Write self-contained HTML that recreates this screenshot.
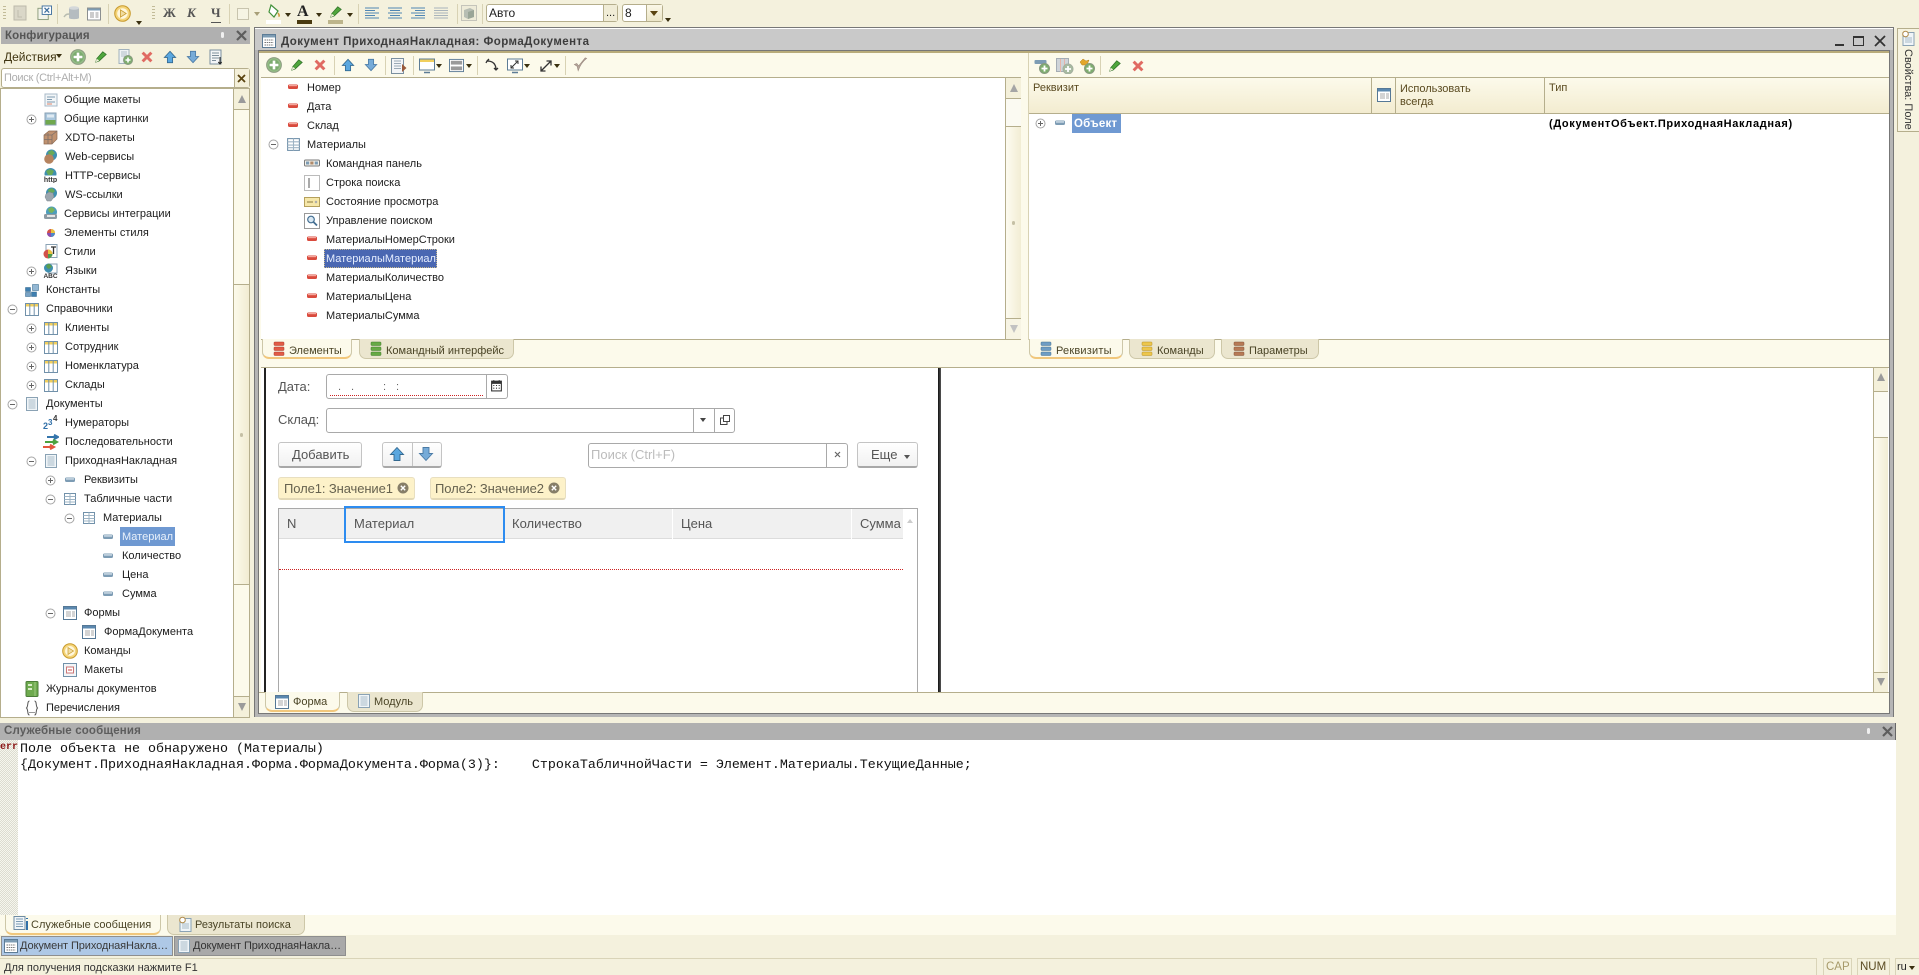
<!DOCTYPE html>
<html lang="ru"><head><meta charset="utf-8"><title>Конфигуратор</title>
<style>
html,body{margin:0;padding:0;width:1919px;height:975px;overflow:hidden;background:#f4f1dd}
body{position:relative;font:11px "Liberation Sans","Noto Sans CJK SC",sans-serif;color:#1c1c1c}
div,span,svg{position:absolute;box-sizing:border-box}
.t{white-space:nowrap;height:19px;line-height:21px}
.i{overflow:visible}
.s{width:1px;background:#d8d2b4}
.h{color:#5a4a20}
.f{font-size:13px;color:#555;white-space:nowrap;line-height:16px}
.tab{height:20px;background:#ebe6cf;border:1px solid #cdc7a8;border-top:0;border-radius:0 0 7px 7px}
.tab.a{background:#fcfaeb;border-bottom:2px solid #f1c77c}
.tt{white-space:nowrap;line-height:16px;color:#4a4426}
.btn{background:linear-gradient(#fff,#f1f1f1);border:1px solid #c4c4c4;border-bottom:2px solid #a8a8a8;border-radius:3px}
.inp{background:#fff;border:1px solid #a9a9a9;border-radius:3px}
.chip{background:#fdf2c9;border:1px solid #e8dfc0;border-bottom:2px solid #e3d9b6;border-radius:3px;height:23px}
.sb{background:linear-gradient(90deg,#fdfbf0,#f2edd4);border-left:1px solid #b5ae8c}
.ar{width:0;height:0;border-left:3px solid transparent;border-right:3px solid transparent;border-top:4px solid #3a3010}
.mn{font:13.33px "Liberation Mono","Noto Sans CJK SC",monospace;color:#111;white-space:pre;line-height:16px}
</style></head><body>
<svg width="0" height="0" style="left:0;top:0">
<symbol id="plus" viewBox="0 0 16 16"><circle cx="8" cy="8" r="7.4" fill="#94bd86" stroke="#8d9c82"/><circle cx="8" cy="8" r="5.5" fill="#7cab70"/><path d="M8 3.6v8.8M3.6 8h8.8" stroke="#fff" stroke-width="2.6"/></symbol>
<symbol id="pen" viewBox="0 0 16 16"><path d="M2 14l1-4 7-8 4 3-8 7.5z" fill="#4fa53c" stroke="#2e6e28" stroke-width=".8"/><path d="M2 14l1-4 3 2z" fill="#f4f1dd"/></symbol>
<symbol id="x" viewBox="0 0 16 16"><path d="M3 3l10 10M13 3L3 13" stroke="#e06a62" stroke-width="3.4"/></symbol>
<symbol id="up" viewBox="0 0 16 16"><path d="M8 1.5L14.5 8.5H11V14.5H5V8.5H1.500z" fill="#5aa7df" stroke="#33688f" stroke-width=".9"/></symbol>
<symbol id="dn" viewBox="0 0 16 16"><path d="M8 14.500L14.500 7.500H11V1.500H5V7.500H1.500z" fill="#76abd8" stroke="#4a7aa5" stroke-width=".9"/></symbol>
<symbol id="ep" viewBox="0 0 11 11"><circle cx="5.500" cy="5.500" r="4.500" fill="#fff" stroke="#a5a5a5"/><path d="M3 5.500h5M5.500 3v5" stroke="#666"/></symbol>
<symbol id="em" viewBox="0 0 11 11"><circle cx="5.500" cy="5.500" r="4.500" fill="#fff" stroke="#a5a5a5"/><path d="M3 5.500h5" stroke="#666"/></symbol>
<symbol id="fr" viewBox="0 0 12 12"><rect x="1" y="3.500" width="10" height="4.500" rx="1.500" fill="#d94a3d"/><rect x="2" y="4" width="8" height="1.200" fill="#f5a79c"/></symbol>
<symbol id="fb" viewBox="0 0 12 12"><rect x="1" y="3.500" width="10" height="4.500" rx="1.500" fill="#7d9cb4"/><rect x="2" y="4.300" width="8" height="1.300" fill="#d7e3ec"/></symbol>
<symbol id="cat" viewBox="0 0 14 14"><rect x=".5" y="1.500" width="13" height="12" fill="#fff" stroke="#7191aa"/><rect x="1" y="2" width="12" height="2.500" fill="#f1cf5d"/><path d="M4.800 2v11M9.200 2v11" stroke="#7191aa"/></symbol>
<symbol id="tp" viewBox="0 0 14 14"><rect x="1.500" y="1.500" width="11" height="11" fill="#fff" stroke="#7191aa"/><path d="M1.500 4.500h11M7 1.500v11M1.500 7.500h11M1.500 10h11" stroke="#9eb4c5"/></symbol>
<symbol id="doc" viewBox="0 0 14 14"><rect x="1.500" y=".5" width="11" height="13" fill="#f0f5f8" stroke="#8aa2b4"/><path d="M3.500 3h7M3.500 5h7M3.500 7h7M3.500 9h7M3.500 11h7" stroke="#a7bbc9"/></symbol>
<symbol id="frm" viewBox="0 0 14 14"><rect x=".5" y=".5" width="13" height="13" fill="#fff" stroke="#557896"/><rect x="1" y="1" width="12" height="2.500" fill="#5b88af"/><path d="M3 6h5M3 8h5M3 10h5M9 6h3M9 8h3M9 10h3" stroke="#aaa"/></symbol>
<symbol id="mak" viewBox="0 0 14 14"><rect x=".5" y=".5" width="13" height="13" fill="#f3f6f8" stroke="#7191aa"/><rect x="3.500" y="4" width="7" height="6" fill="#fff" stroke="#c77"/><path d="M5 7h4" stroke="#c44"/></symbol>
<symbol id="play" viewBox="0 0 16 16"><circle cx="8" cy="8" r="7.300" fill="#f4d479" stroke="#c89a2c"/><circle cx="8" cy="8" r="5" fill="#fff7dc"/><path d="M6 4.500L11.500 8 6 11.500z" fill="#f1dca0" stroke="#c89a2c" stroke-width=".7"/></symbol>
<symbol id="mk" viewBox="0 0 14 14"><rect x="1" y="1" width="12" height="12" fill="#f2f5f7" stroke="#a8bac8"/><path d="M3 4h8M3 6.500h5M3 9h8" stroke="#7e9ab0"/><path d="M3 11h5" stroke="#e0856b"/></symbol>
<symbol id="pic" viewBox="0 0 14 14"><rect x="1" y="1" width="11" height="12" fill="#a9c6dc" stroke="#8aa2b4"/><rect x="1.500" y="8" width="10" height="4.500" fill="#6fa84e"/><rect x="3" y="2.500" width="7" height="3" fill="#dfeaf2"/></symbol>
<symbol id="xd" viewBox="0 0 15 15"><path d="M1 5l5-4h8v8l-5 5H1z" fill="#c09270" stroke="#8f6a4f" stroke-width=".7"/><path d="M1 5h8v9M9 5l5-4M5 3v11M1 9.500h8" stroke="#7d6f68" stroke-width=".8" fill="none"/></symbol>
<symbol id="web" viewBox="0 0 15 15"><circle cx="8.500" cy="6" r="5.500" fill="#3f8fb0"/><path d="M5 3l4-2 3 3-3 3-3-1z" fill="#67a958"/><circle cx="6" cy="10" r="4.800" fill="#b5835f"/></symbol>
<symbol id="http" viewBox="0 0 15 15"><circle cx="7.500" cy="6" r="6" fill="#3f8fb0"/><path d="M3 3l4-2 4 2-2 4-4 0z" fill="#67a958"/><rect x="0" y="7.500" width="15" height="7.500" fill="#fff"/><text x="7.500" y="14" font-family="Liberation Sans" font-size="7" font-weight="700" text-anchor="middle" fill="#333">http</text></symbol>
<symbol id="ws" viewBox="0 0 15 15"><circle cx="8.500" cy="6" r="5.500" fill="#3f8fb0"/><path d="M5 3l4-2 3 3-3 3-3-1z" fill="#67a958"/><path d="M3 7l3-2 4 1 1 4-3 4-4 0-2-4z" fill="#9ca6ae" stroke="#7b858d" stroke-width=".5"/></symbol>
<symbol id="int" viewBox="0 0 15 15"><circle cx="8.500" cy="6" r="5.500" fill="#4e9dbb"/><path d="M5 3l4-2 3 3-3 3-3-1z" fill="#7ab45a"/><rect x="1" y="8" width="13" height="5" rx="1.500" fill="#8d9aa3"/><rect x="4" y="9" width="8" height="2" fill="#e6e6e6"/></symbol>
<symbol id="sel" viewBox="0 0 14 14"><circle cx="7" cy="7" r="4" fill="#d2514a"/><path d="M7 3a4 4 0 0 1 4 4H7z" fill="#e8c23d"/><path d="M11 7a4 4 0 0 1-4 4V7z" fill="#4e89c7"/><path d="M7 11a4 4 0 0 1-4-4h4z" fill="#8a4fb0"/></symbol>
<symbol id="sty" viewBox="0 0 15 15"><rect x="3" y=".5" width="11" height="13" fill="#fff" stroke="#8aa2b4"/><path d="M8 3h5M10.500 3v7" stroke="#333" stroke-width="1.300"/><circle cx="5" cy="10" r="4.500" fill="#d2514a"/><path d="M5 5.500a4.500 4.500 0 0 1 4.500 4.500H5z" fill="#e8c23d"/><path d="M9.500 10A4.500 4.500 0 0 1 5 14.500V10z" fill="#4e9a4f"/></symbol>
<symbol id="lng" viewBox="0 0 15 15"><rect x="5" y="1" width="9" height="9" fill="#fff" stroke="#8aa2b4"/><circle cx="5.500" cy="5" r="4.500" fill="#3f8fb0"/><path d="M3 2.500l3-2 3 3-3 2.500-2-1z" fill="#5a9d4f"/><text x="7.500" y="15" font-family="Liberation Sans" font-size="6.500" font-weight="700" text-anchor="middle" fill="#333">ABC</text></symbol>
<symbol id="con" viewBox="0 0 14 14"><rect x=".5" y="4.500" width="5" height="4" fill="#3f7fb0" stroke="#2d6288" stroke-width=".5"/><rect x=".5" y="9.500" width="5" height="4" fill="#79a3c5" stroke="#2d6288" stroke-width=".5"/><rect x="6.500" y="9" width="5" height="4.500" fill="#3f7fb0" stroke="#2d6288" stroke-width=".5"/><rect x="7.500" y="1.500" width="6" height="6" fill="#94b8d4" stroke="#2d6288" stroke-width=".5"/></symbol>
<symbol id="num" viewBox="0 0 16 16"><text x="0" y="15" font-family="Liberation Sans" font-size="9" font-weight="700" fill="#2f6fa8">2</text><text x="5" y="11" font-family="Liberation Sans" font-size="8" font-weight="700" fill="#2f6fa8">3</text><text x="10" y="7" font-family="Liberation Sans" font-size="8" font-weight="700" fill="#3a3a3a">4</text></symbol>
<symbol id="seq" viewBox="0 0 16 16"><path d="M4 3h9M11 .8L15 3l-4 2.200" stroke="#3475ac" stroke-width="2" fill="none"/><path d="M2 8h10M10 5.800L14 8l-4 2.200" stroke="#4ca23f" stroke-width="2" fill="none"/><path d="M0 13h9M7 10.800l4 2.200-4 2.200" stroke="#e3573e" stroke-width="2" fill="none"/></symbol>
<symbol id="jr" viewBox="0 0 14 16"><rect x="1" y=".5" width="12" height="15" rx="1" fill="#6eaa4e" stroke="#4b7d38"/><rect x="3" y="3" width="4" height="2" fill="#d8ecc8"/><rect x="3" y="7" width="4" height="2" fill="#d8ecc8"/><path d="M10 1v14" stroke="#9dc982"/></symbol>
<symbol id="enu" viewBox="0 0 14 16"><path d="M4.500 1C2 1 3.500 6 1.500 8c2 2 .5 7 3 7M9.500 1c2.500 0 1 5 3 7-2 2-.5 7-3 7" stroke="#555" fill="none"/><path d="M4.500 12.500h1M6.500 12.500h1M8.500 12.500h1" stroke="#333"/></symbol>
<symbol id="cmd" viewBox="0 0 16 14"><rect x=".5" y="4" width="15" height="6" rx="1" fill="#f3f1ea" stroke="#7a7a7a"/><rect x="2" y="5.500" width="3.200" height="3" fill="#7d9cb4"/><rect x="6.300" y="5.500" width="3.200" height="3" fill="#b08a6a"/><rect x="10.700" y="5.500" width="3.200" height="3" fill="#7d9cb4"/></symbol>
<symbol id="str" viewBox="0 0 16 16"><rect x=".5" y=".5" width="15" height="15" fill="#fff" stroke="#bbb"/><path d="M5 3v10" stroke="#555"/></symbol>
<symbol id="st" viewBox="0 0 16 14"><rect x=".5" y="2.500" width="15" height="9" fill="#f6e7a9" stroke="#b5a05c"/><path d="M3 7h6" stroke="#8a7a40"/><path d="M11 6l2 2M13 6l-2 2" stroke="#aaa"/></symbol>
<symbol id="sr" viewBox="0 0 16 16"><rect x=".5" y=".5" width="15" height="15" fill="#fff" stroke="#999"/><circle cx="7" cy="6.500" r="3.300" fill="#d9e8f3" stroke="#446f92" stroke-width="1.200"/><path d="M9.500 9l3.500 3.500" stroke="#446f92" stroke-width="1.800"/></symbol>
<symbol id="l3r" viewBox="0 0 12 16"><rect x="1" y="1" width="10" height="3.500" rx=".7" fill="#e25b46" stroke="#a83a2c" stroke-width=".5"/><rect x="1" y="6" width="10" height="3.500" rx=".7" fill="#e25b46" stroke="#a83a2c" stroke-width=".5"/><rect x="1" y="11" width="10" height="3.500" rx=".7" fill="#e25b46" stroke="#a83a2c" stroke-width=".5"/></symbol>
<symbol id="l3g" viewBox="0 0 12 16"><rect x="1" y="1" width="10" height="3.500" rx=".7" fill="#67aa45" stroke="#3f7a2a" stroke-width=".5"/><rect x="1" y="6" width="10" height="3.500" rx=".7" fill="#67aa45" stroke="#3f7a2a" stroke-width=".5"/><rect x="1" y="11" width="10" height="3.500" rx=".7" fill="#67aa45" stroke="#3f7a2a" stroke-width=".5"/></symbol>
<symbol id="l3b" viewBox="0 0 12 16"><rect x="1" y="1" width="10" height="3.500" rx=".7" fill="#6f9dc4" stroke="#47708f" stroke-width=".5"/><rect x="1" y="6" width="10" height="3.500" rx=".7" fill="#6f9dc4" stroke="#47708f" stroke-width=".5"/><rect x="1" y="11" width="10" height="3.500" rx=".7" fill="#6f9dc4" stroke="#47708f" stroke-width=".5"/></symbol>
<symbol id="l3y" viewBox="0 0 12 16"><rect x="1" y="1" width="10" height="3.500" rx=".7" fill="#edc64c" stroke="#b48f25" stroke-width=".5"/><rect x="1" y="6" width="10" height="3.500" rx=".7" fill="#edc64c" stroke="#b48f25" stroke-width=".5"/><rect x="1" y="11" width="10" height="3.500" rx=".7" fill="#edc64c" stroke="#b48f25" stroke-width=".5"/></symbol>
<symbol id="l3n" viewBox="0 0 12 16"><rect x="1" y="1" width="10" height="3.500" rx=".7" fill="#b77a55" stroke="#815338" stroke-width=".5"/><rect x="1" y="6" width="10" height="3.500" rx=".7" fill="#b77a55" stroke="#815338" stroke-width=".5"/><rect x="1" y="11" width="10" height="3.500" rx=".7" fill="#b77a55" stroke="#815338" stroke-width=".5"/></symbol>
<symbol id="msg" viewBox="0 0 16 16"><rect x="1" y=".5" width="11" height="13" fill="#f0f5f8" stroke="#6f8ca3"/><path d="M3 3h7M3 5.500h7M3 8h7M3 10.500h7" stroke="#7d9cb4"/><path d="M14 2v1M14 5v9" stroke="#2f6fa8" stroke-width="2"/></symbol>
<symbol id="find" viewBox="0 0 16 16"><rect x="3" y="2.500" width="11" height="13" fill="#f0f5f8" stroke="#8aa2b4"/><path d="M5 8h7M5 10h7M5 12h7" stroke="#a7bbc9"/><circle cx="5.500" cy="4" r="2.800" fill="#fff" stroke="#b08a4a"/></symbol>
<symbol id="gray" viewBox="0 0 14 16"><rect x="1" y="1" width="12" height="14" fill="#dad7c8" stroke="#bcb9aa"/><path d="M5 5v7h4" stroke="#c0bdae" fill="none"/></symbol>
<symbol id="dbg" viewBox="0 0 18 16"><path d="M6 3v10c0 1.500 10 1.500 10 0V3z" fill="#b5bcc0"/><ellipse cx="11" cy="3" rx="5" ry="1.800" fill="#d4d8da"/><path d="M1 12c2-3 3-3 6-3" stroke="#b8bcb0" stroke-width="1.500" fill="none"/></symbol>
<symbol id="dx" viewBox="0 0 16 16"><rect x="1" y="3" width="11" height="12" fill="#f3f3ea" stroke="#8b9b7b"/><rect x="5.500" y=".5" width="10" height="9" fill="#fff" stroke="#3f6f9e"/><path d="M8 2.500l5 5M13 2.500l-5 5" stroke="#3f6f9e" stroke-width="1.400"/></symbol>
<symbol id="wn" viewBox="0 0 14 14"><rect x=".5" y="1" width="13" height="12" fill="#fff" stroke="#8b8f90"/><rect x="1" y="1.500" width="12" height="2" fill="#7d9cb4"/><path d="M3 6h4M3 8h4M3 10h4M8.500 6h3M8.500 8h3M8.500 10h3" stroke="#999"/></symbol>
<symbol id="ttl" viewBox="0 0 14 14"><rect x=".5" y=".5" width="13" height="13" fill="#fff" stroke="#5d7c96"/><rect x="1" y="1" width="12" height="2.500" fill="#7d9cb4"/><path d="M2.500 6h9M2.500 8.500h9M2.500 11h9" stroke="#777" stroke-dasharray="1.500 .7"/></symbol>
<symbol id="sw" viewBox="0 0 16 16"><rect x=".5" y="1" width="15" height="11" fill="#fff" stroke="#5d7c96"/><rect x="1" y="1.500" width="14" height="2.500" fill="#f1cf5d"/><path d="M5 14.500h6" stroke="#5d7c96" stroke-width="1.500"/></symbol>
<symbol id="sp" viewBox="0 0 16 16"><rect x=".5" y="1.500" width="15" height="13" fill="#fff" stroke="#5d7c96"/><rect x="2" y="3" width="12" height="4" fill="#9a9a9a"/><rect x="2" y="9" width="12" height="4" fill="#9a9a9a"/></symbol>
<symbol id="rs" viewBox="0 0 16 16"><rect x=".5" y="1" width="15" height="11" fill="#fff" stroke="#5d7c96"/><path d="M4 10l7-7M8 3h3v3M4 7v3h3" stroke="#333" fill="none"/><path d="M5 14.500h6" stroke="#5d7c96" stroke-width="1.500"/></symbol>
<symbol id="di" viewBox="0 0 14 14"><path d="M2 12L12 2M7.500 2H12v4.500M2 7.500V12h4.500" stroke="#333" stroke-width="1.300" fill="none"/></symbol>
<symbol id="flip" viewBox="0 0 14 14"><path d="M2 3c6 0 9 3 9 9M1 5l1-2 2-2M9 10l2 2 2-2" stroke="#333" stroke-width="1.300" fill="none"/></symbol>
<symbol id="ok" viewBox="0 0 16 16"><path d="M1.500 8l3 2 1 4.500C7.500 9 10 5 14.500 1.500L13 1 6 9.500 4 7z" fill="#b7a79d" stroke="#9b8a80" stroke-width=".7"/></symbol>
<symbol id="fw" viewBox="0 0 16 16"><rect x=".5" y=".5" width="12" height="15" fill="#f3f5f7" stroke="#7a8f9f"/><path d="M3 3h7M3 5.500h7M3 8h7M3 10.500h7" stroke="#9aa9b5"/><path d="M11 6l4.500 4-4.500 4z" fill="#9a5a3a"/></symbol>
<symbol id="la" viewBox="0 0 14 16"><rect x="1" y="1" width="11" height="14" fill="#f3f5f7" stroke="#7a8f9f"/><path d="M3 4h7M3 6.500h7M3 9h7M3 11.500h4" stroke="#7d8e9b"/><path d="M11 8v7M9.300 13l1.700 2 1.700-2" stroke="#222" fill="none"/></symbol>
<symbol id="dn1" viewBox="0 0 16 16"><rect x="2" y=".5" width="10" height="14" fill="#eef2f4" stroke="#a2b2bd"/><path d="M4 3h6M4 5h6M4 7h6" stroke="#b0bec8"/><circle cx="11" cy="11" r="4.500" fill="#7dad6e" stroke="#889a80"/><path d="M11 8.500v5M8.500 11h5" stroke="#fff" stroke-width="1.600"/></symbol>
<symbol id="ad1" viewBox="0 0 16 16"><rect x=".5" y="2" width="12" height="4" rx="1" fill="#7d9cb4"/><circle cx="10.500" cy="10.500" r="5" fill="#7dad6e" stroke="#889a80"/><path d="M10.500 7.500v6M7.500 10.500h6" stroke="#fff" stroke-width="1.800"/></symbol>
<symbol id="ad2" viewBox="0 0 18 16"><rect x=".5" y=".5" width="12" height="13" fill="#cfd4d9" stroke="#a5adb4"/><path d="M4.500 1v13M8.500 1v13" stroke="#e6b4a8"/><circle cx="12" cy="11" r="5" fill="#a7bba0" stroke="#a5b0a0"/><path d="M12 8v6M9 11h6" stroke="#fff" stroke-width="1.800"/></symbol>
<symbol id="ad3" viewBox="0 0 16 16"><path d="M1 4l3-3 3 2 3-1-2 5H3z" fill="#e3a62c" stroke="#b07d18" stroke-width=".5"/><circle cx="10.500" cy="10.500" r="5" fill="#7dad6e" stroke="#889a80"/><path d="M10.500 7.500v6M7.500 10.500h6" stroke="#fff" stroke-width="1.800"/></symbol>
<symbol id="cal" viewBox="0 0 12 12"><rect x="1.500" y="2" width="9" height="9" fill="#fff" stroke="#333"/><rect x="1.500" y="2" width="9" height="2.500" fill="#333"/><path d="M3 6h1M5.500 6h1M8 6h1M3 8.500h1M5.500 8.500h1M8 8.500h1" stroke="#333"/><path d="M3.500 1v1.500M8.500 1v1.500" stroke="#333"/></symbol>
<symbol id="opn" viewBox="0 0 12 12"><rect x="4.500" y="1.500" width="6" height="6" fill="#fff" stroke="#444"/><path d="M4 4H1.500v6.500H8V8" stroke="#444" fill="none"/></symbol>
<symbol id="cc" viewBox="0 0 12 12"><circle cx="6" cy="6" r="5.500" fill="#867e68"/><path d="M3.800 3.800l4.400 4.400M8.200 3.800L3.800 8.200" stroke="#fff" stroke-width="1.400"/></symbol>
<symbol id="al" viewBox="0 0 14 12"><path d="M0 1h14M0 3.500h10M0 6h14M0 8.500h10M0 11h14" stroke="#4f86b4"/></symbol>
<symbol id="ac" viewBox="0 0 14 12"><path d="M0 1h14M2 3.500h10M0 6h14M2 8.500h10M0 11h14" stroke="#4f86b4"/></symbol>
<symbol id="ari" viewBox="0 0 14 12"><path d="M0 1h14M4 3.500h10M0 6h14M4 8.500h10M0 11h14" stroke="#4f86b4"/></symbol>
<symbol id="aj" viewBox="0 0 14 12"><path d="M0 1h14M0 3.500h14M0 6h14M0 8.500h14M0 11h14" stroke="#a9b4bb"/></symbol>
<symbol id="cube" viewBox="0 0 16 16"><rect x=".5" y=".5" width="15" height="15" fill="#eeebd8" stroke="#999" stroke-dasharray="1 1"/><path d="M3 5l6-2 4 2v7l-6 2-4-2z" fill="#b7bdb3"/><path d="M7 7l6-2v7l-6 2z" fill="#9aa597"/></symbol>
<symbol id="bkt" viewBox="0 0 14 16"><path d="M4 1l7 6-4 6-5-5z" fill="#fff" stroke="#42913a" stroke-width="1.200"/><path d="M11 9c1.500 2 1.500 3 .5 3.500" stroke="#c99a3a" stroke-width="1.500" fill="none"/></symbol>
</svg>

<!-- main toolbar -->
<div style="left:3px;top:6px;width:3px;height:15px;background:repeating-linear-gradient(#c2bb98 0 1px,transparent 1px 3px)"></div>
<svg class="i" style="left:13px;top:5px;width:14px;height:16px"><use href="#gray"/></svg>
<svg class="i" style="left:37px;top:5px;width:15px;height:16px"><use href="#dx"/></svg>
<div class="s" style="left:57px;top:4px;height:20px"></div>
<svg class="i" style="left:63px;top:5px;width:18px;height:16px"><use href="#dbg"/></svg>
<svg class="i" style="left:87px;top:7px;width:14px;height:14px"><use href="#wn"/></svg>
<div class="s" style="left:108px;top:4px;height:20px"></div>
<svg class="i" style="left:114px;top:5px;width:17px;height:17px"><use href="#play"/></svg>
<div class="ar" style="left:136px;top:21px"></div>
<div style="left:152px;top:6px;width:3px;height:15px;background:repeating-linear-gradient(#c2bb98 0 1px,transparent 1px 3px)"></div>
<span style="left:163px;top:5px;font:bold 13px/16px 'Liberation Serif',serif;color:#555">Ж</span>
<span style="left:187px;top:5px;font:italic bold 13px/16px 'Liberation Serif',serif;color:#555">К</span>
<span style="left:211px;top:5px;font:bold 13px/16px 'Liberation Serif',serif;color:#555;border-bottom:1px solid #555;height:18px">Ч</span>
<div class="s" style="left:229px;top:4px;height:20px"></div>
<div style="left:237px;top:8px;width:12px;height:12px;border:1px solid #c8c4ae;background:#f6f4e4"></div>
<div class="ar" style="left:254px;top:12px;border-top-color:#a89f78"></div>
<svg class="i" style="left:267px;top:4px;width:14px;height:16px"><use href="#bkt"/></svg><div style="left:266px;top:20px;width:15px;height:4px;background:#fff"></div>
<div class="ar" style="left:285px;top:13px"></div>
<span style="left:297px;top:3px;font:bold 16px/18px 'Liberation Serif',serif;color:#222">A</span><div style="left:297px;top:20px;width:15px;height:4px;background:#4a3a10"></div>
<div class="ar" style="left:316px;top:13px"></div>
<svg class="i" style="left:329px;top:5px;width:14px;height:14px"><use href="#pen"/></svg><div style="left:328px;top:20px;width:15px;height:4px;background:#bdb58c"></div>
<div class="ar" style="left:347px;top:13px"></div>
<div class="s" style="left:358px;top:4px;height:20px"></div>
<svg class="i" style="left:365px;top:7px;width:14px;height:12px"><use href="#al"/></svg>
<svg class="i" style="left:388px;top:7px;width:14px;height:12px"><use href="#ac"/></svg>
<svg class="i" style="left:411px;top:7px;width:14px;height:12px"><use href="#ari"/></svg>
<svg class="i" style="left:434px;top:7px;width:14px;height:12px"><use href="#aj"/></svg>
<div class="s" style="left:457px;top:4px;height:20px"></div>
<svg class="i" style="left:461px;top:5px;width:16px;height:16px"><use href="#cube"/></svg>
<div class="s" style="left:482px;top:4px;height:20px"></div>
<div style="left:486px;top:4px;width:132px;height:18px;background:#fff;border:1px solid #b5ae8c;border-radius:3px"></div>
<span style="left:489px;top:5px;line-height:16px;font-size:12px">Авто</span>
<div style="left:603px;top:5px;width:14px;height:16px;background:#f0ecd6;border-left:1px solid #b5ae8c"></div>
<span style="left:606px;top:6px;font-size:11px;line-height:15px">...</span>
<div style="left:622px;top:4px;width:41px;height:18px;background:#fff;border:1px solid #b5ae8c;border-radius:3px"></div>
<span style="left:625px;top:5px;line-height:16px;font-size:12px">8</span>
<div style="left:646px;top:5px;width:16px;height:16px;background:linear-gradient(#fbf8e8,#ece6c8);border-left:1px solid #b5ae8c"></div>
<div class="ar" style="left:650px;top:11px;border-left-width:4px;border-right-width:4px;border-top-width:5px;border-top-color:#5a4410"></div>
<div class="ar" style="left:665px;top:18px"></div>

<!-- left config panel -->
<div style="left:1px;top:27px;width:249px;height:17px;background:#b0b0b0"></div>
<span style="left:5px;top:28px;font-weight:700;font-size:11.500px;line-height:17px;color:#555;letter-spacing:.1px">Конфигурация</span>
<div style="left:221px;top:32px;width:3px;height:6px;background:#f0f0f0;border-radius:2px"></div>
<svg class="i" style="left:235px;top:29px;width:13px;height:13px"><path d="M2 2l9 9M11 2l-9 9" stroke="#5d5d5d" stroke-width="2.200"/></svg>
<span class="h" style="left:4px;top:49px;font-size:12px;line-height:16px;color:#3f3410">Действия</span>
<div class="ar" style="left:56px;top:54px"></div>
<svg class="i" style="left:70px;top:49px;width:16px;height:16px"><use href="#plus"/></svg>
<svg class="i" style="left:94px;top:50px;width:14px;height:14px"><use href="#pen"/></svg>
<svg class="i" style="left:117px;top:49px;width:16px;height:16px"><use href="#dn1"/></svg>
<svg class="i" style="left:140px;top:50px;width:14px;height:14px"><use href="#x"/></svg>
<svg class="i" style="left:163px;top:50px;width:14px;height:14px"><use href="#up"/></svg>
<svg class="i" style="left:186px;top:50px;width:14px;height:14px"><use href="#dn"/></svg>
<svg class="i" style="left:209px;top:49px;width:14px;height:16px"><use href="#la"/></svg>
<div style="left:1px;top:68px;width:249px;height:20px;background:#fff;border:1px solid #b5ae8c;border-radius:3px"></div>
<span style="left:4px;top:70px;font-size:11px;line-height:16px;color:#aeaeae;letter-spacing:-.3px;white-space:nowrap">Поиск (Ctrl+Alt+M)</span>
<div style="left:234px;top:69px;width:15px;height:18px;background:#f4f0da;border-left:1px solid #b5ae8c"></div>
<svg class="i" style="left:237px;top:74px;width:9px;height:9px"><path d="M1 1l7 7M8 1L1 8" stroke="#5a4410" stroke-width="1.800"/></svg>

<div style="left:0;top:88px;width:250px;height:630px;background:#fff;border:1px solid #b5ae8c"></div>
<div class="sb" style="left:233px;top:89px;width:16px;height:628px;background:#fcfaeb"></div>
<div style="left:234px;top:284px;width:15px;height:301px;background:linear-gradient(90deg,#fcfaeb,#f1ecd2);border-top:1px solid #b5ae8c;border-bottom:1px solid #b5ae8c"></div>
<div style="left:234px;top:89px;width:15px;height:21px;background:#f4f0da;border-bottom:1px solid #b5ae8c"></div>
<div style="left:238px;top:95px;width:0;height:0;border-left:4px solid transparent;border-right:4px solid transparent;border-bottom:8px solid #9a9a9a"></div>
<div style="left:234px;top:696px;width:15px;height:21px;background:#f4f0da;border-top:1px solid #b5ae8c"></div>
<div style="left:238px;top:703px;width:0;height:0;border-left:4px solid transparent;border-right:4px solid transparent;border-top:8px solid #9a9a9a"></div>
<div style="left:240px;top:433px;width:3px;height:4px;background:#c5c0a5;border-radius:2px"></div>

<!-- tree rows -->
<svg class="i" style="left:44px;top:93px;width:14px;height:14px"><use href="#mk"/></svg><span class="t" style="left:64px;top:90px">Общие макеты</span>
<svg class="i" style="left:26px;top:114px;width:11px;height:11px"><use href="#ep"/></svg><svg class="i" style="left:44px;top:112px;width:14px;height:14px"><use href="#pic"/></svg><span class="t" style="left:64px;top:109px">Общие картинки</span>
<svg class="i" style="left:43px;top:130px;width:15px;height:15px"><use href="#xd"/></svg><span class="t" style="left:65px;top:128px">XDTO-пакеты</span>
<svg class="i" style="left:43px;top:149px;width:15px;height:15px"><use href="#web"/></svg><span class="t" style="left:65px;top:147px">Web-сервисы</span>
<svg class="i" style="left:43px;top:168px;width:15px;height:15px"><use href="#http"/></svg><span class="t" style="left:65px;top:166px">HTTP-сервисы</span>
<svg class="i" style="left:43px;top:187px;width:15px;height:15px"><use href="#ws"/></svg><span class="t" style="left:65px;top:185px">WS-ссылки</span>
<svg class="i" style="left:43px;top:206px;width:15px;height:15px"><use href="#int"/></svg><span class="t" style="left:64px;top:204px">Сервисы интеграции</span>
<svg class="i" style="left:44px;top:226px;width:14px;height:14px"><use href="#sel"/></svg><span class="t" style="left:64px;top:223px">Элементы стиля</span>
<svg class="i" style="left:43px;top:244px;width:15px;height:15px"><use href="#sty"/></svg><span class="t" style="left:64px;top:242px">Стили</span>
<svg class="i" style="left:26px;top:266px;width:11px;height:11px"><use href="#ep"/></svg><svg class="i" style="left:43px;top:263px;width:15px;height:15px"><use href="#lng"/></svg><span class="t" style="left:65px;top:261px">Языки</span>
<svg class="i" style="left:25px;top:283px;width:14px;height:14px"><use href="#con"/></svg><span class="t" style="left:46px;top:280px">Константы</span>
<svg class="i" style="left:7px;top:304px;width:11px;height:11px"><use href="#em"/></svg><svg class="i" style="left:25px;top:302px;width:14px;height:14px"><use href="#cat"/></svg><span class="t" style="left:46px;top:299px">Справочники</span>
<svg class="i" style="left:26px;top:323px;width:11px;height:11px"><use href="#ep"/></svg><svg class="i" style="left:44px;top:321px;width:14px;height:14px"><use href="#cat"/></svg><span class="t" style="left:65px;top:318px">Клиенты</span>
<svg class="i" style="left:26px;top:342px;width:11px;height:11px"><use href="#ep"/></svg><svg class="i" style="left:44px;top:340px;width:14px;height:14px"><use href="#cat"/></svg><span class="t" style="left:65px;top:337px">Сотрудник</span>
<svg class="i" style="left:26px;top:361px;width:11px;height:11px"><use href="#ep"/></svg><svg class="i" style="left:44px;top:359px;width:14px;height:14px"><use href="#cat"/></svg><span class="t" style="left:65px;top:356px">Номенклатура</span>
<svg class="i" style="left:26px;top:380px;width:11px;height:11px"><use href="#ep"/></svg><svg class="i" style="left:44px;top:378px;width:14px;height:14px"><use href="#cat"/></svg><span class="t" style="left:65px;top:375px">Склады</span>
<svg class="i" style="left:7px;top:399px;width:11px;height:11px"><use href="#em"/></svg><svg class="i" style="left:25px;top:397px;width:14px;height:14px"><use href="#doc"/></svg><span class="t" style="left:46px;top:394px">Документы</span>
<svg class="i" style="left:43px;top:414px;width:16px;height:16px"><use href="#num"/></svg><span class="t" style="left:65px;top:413px">Нумераторы</span>
<svg class="i" style="left:43px;top:434px;width:16px;height:16px"><use href="#seq"/></svg><span class="t" style="left:65px;top:432px">Последовательности</span>
<svg class="i" style="left:26px;top:456px;width:11px;height:11px"><use href="#em"/></svg><svg class="i" style="left:44px;top:454px;width:14px;height:14px"><use href="#doc"/></svg><span class="t" style="left:65px;top:451px">ПриходнаяНакладная</span>
<svg class="i" style="left:45px;top:475px;width:11px;height:11px"><use href="#ep"/></svg><svg class="i" style="left:64px;top:474px;width:12px;height:12px"><use href="#fb"/></svg><span class="t" style="left:84px;top:470px">Реквизиты</span>
<svg class="i" style="left:45px;top:494px;width:11px;height:11px"><use href="#em"/></svg><svg class="i" style="left:63px;top:492px;width:14px;height:14px"><use href="#tp"/></svg><span class="t" style="left:84px;top:489px">Табличные части</span>
<svg class="i" style="left:64px;top:513px;width:11px;height:11px"><use href="#em"/></svg><svg class="i" style="left:82px;top:511px;width:14px;height:14px"><use href="#tp"/></svg><span class="t" style="left:103px;top:508px">Материалы</span>
<svg class="i" style="left:102px;top:531px;width:12px;height:12px"><use href="#fb"/></svg><div style="left:120px;top:527px;width:55px;height:19px;background:#6f99d2"></div><span class="t" style="left:122px;top:527px;color:#e9f1fb">Материал</span>
<svg class="i" style="left:102px;top:550px;width:12px;height:12px"><use href="#fb"/></svg><span class="t" style="left:122px;top:546px">Количество</span>
<svg class="i" style="left:102px;top:569px;width:12px;height:12px"><use href="#fb"/></svg><span class="t" style="left:122px;top:565px">Цена</span>
<svg class="i" style="left:102px;top:588px;width:12px;height:12px"><use href="#fb"/></svg><span class="t" style="left:122px;top:584px">Сумма</span>
<svg class="i" style="left:45px;top:608px;width:11px;height:11px"><use href="#em"/></svg><svg class="i" style="left:63px;top:606px;width:14px;height:14px"><use href="#frm"/></svg><span class="t" style="left:84px;top:603px">Формы</span>
<svg class="i" style="left:82px;top:625px;width:14px;height:14px"><use href="#frm"/></svg><span class="t" style="left:104px;top:622px">ФормаДокумента</span>
<svg class="i" style="left:62px;top:643px;width:16px;height:16px"><use href="#play"/></svg><span class="t" style="left:84px;top:641px">Команды</span>
<svg class="i" style="left:63px;top:663px;width:14px;height:14px"><use href="#mak"/></svg><span class="t" style="left:84px;top:660px">Макеты</span>
<svg class="i" style="left:25px;top:681px;width:14px;height:16px"><use href="#jr"/></svg><span class="t" style="left:46px;top:679px">Журналы документов</span>
<svg class="i" style="left:25px;top:700px;width:14px;height:16px"><use href="#enu"/></svg><span class="t" style="left:46px;top:698px">Перечисления</span>

<!-- document window frame -->
<div style="left:254px;top:27px;width:1640px;height:690px;background:#b5b5b5;border:1px solid #777;border-bottom:0"></div>
<div style="left:255px;top:28px;width:1638px;height:1px;background:#fff"></div>
<div style="left:255px;top:29px;width:1638px;height:21px;background:#c9c9c9"></div>
<svg class="i" style="left:262px;top:34px;width:14px;height:14px"><use href="#ttl"/></svg>
<span style="left:281px;top:34px;font-weight:700;font-size:11.500px;line-height:16px;color:#3d3d3d;white-space:nowrap;letter-spacing:.45px">Документ ПриходнаяНакладная: ФормаДокумента</span>
<div style="left:1835px;top:44px;width:9px;height:2px;background:#333"></div>
<div style="left:1853px;top:36px;width:11px;height:10px;border:1px solid #333;border-top-width:2px"></div>
<svg class="i" style="left:1874px;top:35px;width:12px;height:12px"><path d="M1 1l10 10M11 1L1 11" stroke="#333" stroke-width="1.800"/></svg>
<div style="left:258px;top:50px;width:1632px;height:664px;background:#fcfaeb;border:1px solid #777"></div>
<div style="left:259px;top:51px;width:1630px;height:2px;background:#b8ab7a"></div>

<!-- upper-left pane toolbar -->
<div style="left:261px;top:77px;width:760px;height:1px;background:#b5ae8c"></div>
<svg class="i" style="left:266px;top:57px;width:16px;height:16px"><use href="#plus"/></svg>
<svg class="i" style="left:290px;top:58px;width:14px;height:14px"><use href="#pen"/></svg>
<svg class="i" style="left:313px;top:58px;width:14px;height:14px"><use href="#x"/></svg>
<div class="s" style="left:334px;top:56px;height:19px"></div>
<svg class="i" style="left:341px;top:58px;width:14px;height:14px"><use href="#up"/></svg>
<svg class="i" style="left:364px;top:58px;width:14px;height:14px"><use href="#dn"/></svg>
<div class="s" style="left:385px;top:56px;height:19px"></div>
<svg class="i" style="left:391px;top:58px;width:16px;height:16px"><use href="#fw"/></svg>
<div class="s" style="left:413px;top:56px;height:19px"></div>
<svg class="i" style="left:419px;top:58px;width:16px;height:16px"><use href="#sw"/></svg><div class="ar" style="left:436px;top:64px"></div>
<svg class="i" style="left:449px;top:58px;width:15px;height:15px"><use href="#sp"/></svg><div class="ar" style="left:466px;top:64px"></div>
<div class="s" style="left:477px;top:56px;height:19px"></div>
<svg class="i" style="left:485px;top:58px;width:14px;height:14px"><use href="#flip"/></svg>
<svg class="i" style="left:507px;top:58px;width:16px;height:16px"><use href="#rs"/></svg><div class="ar" style="left:524px;top:64px"></div>
<svg class="i" style="left:539px;top:59px;width:14px;height:14px"><use href="#di"/></svg><div class="ar" style="left:554px;top:64px"></div>
<div class="s" style="left:565px;top:56px;height:19px"></div>
<svg class="i" style="left:573px;top:57px;width:15px;height:15px"><use href="#ok"/></svg>

<!-- upper-left tree -->
<div style="left:261px;top:78px;width:760px;height:262px;background:#fff;border-bottom:1px solid #b5ae8c"></div>
<div class="sb" style="left:1005px;top:78px;width:16px;height:261px"></div>
<div style="left:1006px;top:78px;width:15px;height:21px;background:#f4f0da;border-bottom:1px solid #b5ae8c"></div>
<div style="left:1010px;top:84px;width:0;height:0;border-left:4px solid transparent;border-right:4px solid transparent;border-bottom:8px solid #a5a5a5"></div>
<div style="left:1006px;top:99px;width:15px;height:28px;background:#fbfaf2;border-bottom:1px solid #b5ae8c"></div>
<div style="left:1006px;top:318px;width:15px;height:21px;background:#f7f4e4;border-top:1px solid #b5ae8c"></div>
<div style="left:1010px;top:325px;width:0;height:0;border-left:4px solid transparent;border-right:4px solid transparent;border-top:8px solid #c2c2c2"></div>
<div style="left:1012px;top:221px;width:3px;height:4px;background:#c5c0a5;border-radius:2px"></div>

<svg class="i" style="left:287px;top:81px;width:12px;height:12px"><use href="#fr"/></svg><span class="t" style="left:307px;top:78px">Номер</span>
<svg class="i" style="left:287px;top:100px;width:12px;height:12px"><use href="#fr"/></svg><span class="t" style="left:307px;top:97px">Дата</span>
<svg class="i" style="left:287px;top:119px;width:12px;height:12px"><use href="#fr"/></svg><span class="t" style="left:307px;top:116px">Склад</span>
<svg class="i" style="left:268px;top:139px;width:11px;height:11px"><use href="#em"/></svg><svg class="i" style="left:286px;top:137px;width:15px;height:15px"><use href="#tp"/></svg><span class="t" style="left:307px;top:135px">Материалы</span>
<svg class="i" style="left:304px;top:156px;width:16px;height:14px"><use href="#cmd"/></svg><span class="t" style="left:326px;top:154px">Командная панель</span>
<svg class="i" style="left:304px;top:175px;width:16px;height:16px"><use href="#str"/></svg><span class="t" style="left:326px;top:173px">Строка поиска</span>
<svg class="i" style="left:304px;top:195px;width:16px;height:14px"><use href="#st"/></svg><span class="t" style="left:326px;top:192px">Состояние просмотра</span>
<svg class="i" style="left:304px;top:213px;width:16px;height:16px"><use href="#sr"/></svg><span class="t" style="left:326px;top:211px">Управление поиском</span>
<svg class="i" style="left:306px;top:233px;width:12px;height:12px"><use href="#fr"/></svg><span class="t" style="left:326px;top:230px">МатериалыНомерСтроки</span>
<svg class="i" style="left:306px;top:252px;width:12px;height:12px"><use href="#fr"/></svg><div style="left:324px;top:249px;width:113px;height:19px;background:#4a67b2;outline:1px dotted #c9b98a;outline-offset:-1px"></div><span class="t" style="left:326px;top:249px;color:#e6eeff">МатериалыМатериал</span>
<svg class="i" style="left:306px;top:271px;width:12px;height:12px"><use href="#fr"/></svg><span class="t" style="left:326px;top:268px">МатериалыКоличество</span>
<svg class="i" style="left:306px;top:290px;width:12px;height:12px"><use href="#fr"/></svg><span class="t" style="left:326px;top:287px">МатериалыЦена</span>
<svg class="i" style="left:306px;top:309px;width:12px;height:12px"><use href="#fr"/></svg><span class="t" style="left:326px;top:306px">МатериалыСумма</span>

<!-- upper tabs strip -->
<div style="left:261px;top:367px;width:1628px;height:1px;background:#b5ae8c"></div>
<div class="tab a" style="left:262px;top:339px;width:90px"></div>
<svg class="i" style="left:273px;top:341px;width:12px;height:16px"><use href="#l3r"/></svg>
<span class="tt" style="left:289px;top:343px">Элементы</span>
<div class="tab" style="left:359px;top:339px;width:155px"></div>
<svg class="i" style="left:370px;top:341px;width:12px;height:16px"><use href="#l3g"/></svg>
<span class="tt" style="left:386px;top:343px">Командный интерфейс</span>

<!-- right pane -->
<div style="left:1028px;top:53px;width:1px;height:287px;background:#d8d2b4"></div>
<div style="left:1029px;top:77px;width:860px;height:1px;background:#b5ae8c"></div>
<svg class="i" style="left:1034px;top:58px;width:16px;height:16px"><use href="#ad1"/></svg>
<svg class="i" style="left:1056px;top:58px;width:18px;height:16px"><use href="#ad2"/></svg>
<svg class="i" style="left:1079px;top:58px;width:16px;height:16px"><use href="#ad3"/></svg>
<div class="s" style="left:1100px;top:56px;height:19px"></div>
<svg class="i" style="left:1108px;top:59px;width:14px;height:14px"><use href="#pen"/></svg>
<svg class="i" style="left:1131px;top:59px;width:14px;height:14px"><use href="#x"/></svg>
<div style="left:1029px;top:78px;width:860px;height:36px;background:linear-gradient(#fcfaeb,#f3ecd0);border-bottom:1px solid #b5ae8c"></div>
<div style="left:1371px;top:78px;width:1px;height:35px;background:#b5ae8c"></div>
<div style="left:1395px;top:78px;width:1px;height:35px;background:#b5ae8c"></div>
<div style="left:1544px;top:78px;width:1px;height:35px;background:#b5ae8c"></div>
<span class="t h" style="left:1033px;top:78px">Реквизит</span>
<svg class="i" style="left:1377px;top:88px;width:14px;height:14px"><use href="#frm"/></svg>
<span class="h" style="left:1400px;top:83px;line-height:13px;white-space:nowrap">Использовать<br>всегда</span>
<span class="t h" style="left:1549px;top:78px">Тип</span>
<div style="left:1029px;top:114px;width:860px;height:226px;background:#fff;border-bottom:1px solid #b5ae8c"></div>
<svg class="i" style="left:1035px;top:118px;width:11px;height:11px"><use href="#ep"/></svg>
<svg class="i" style="left:1054px;top:117px;width:12px;height:12px"><use href="#fb"/></svg>
<div style="left:1072px;top:114px;width:49px;height:19px;background:#6f99d2"></div>
<span class="t" style="left:1074px;top:114px;color:#fff;font-weight:700;font-size:11.500px;letter-spacing:.2px">Объект</span>
<span class="t" style="left:1549px;top:114px;font-weight:700;color:#000;letter-spacing:.65px">(ДокументОбъект.ПриходнаяНакладная)</span>

<div class="tab a" style="left:1029px;top:339px;width:94px"></div>
<svg class="i" style="left:1040px;top:341px;width:12px;height:16px"><use href="#l3b"/></svg>
<span class="tt" style="left:1056px;top:343px;letter-spacing:.2px">Реквизиты</span>
<div class="tab" style="left:1129px;top:339px;width:86px"></div>
<svg class="i" style="left:1141px;top:341px;width:12px;height:16px"><use href="#l3y"/></svg>
<span class="tt" style="left:1157px;top:343px">Команды</span>
<div class="tab" style="left:1221px;top:339px;width:98px"></div>
<svg class="i" style="left:1233px;top:341px;width:12px;height:16px"><use href="#l3n"/></svg>
<span class="tt" style="left:1249px;top:343px">Параметры</span>

<!-- form area -->
<div style="left:261px;top:368px;width:1628px;height:324px;background:#fff"></div>
<div style="left:264px;top:368px;width:2px;height:324px;background:#222"></div>
<div style="left:938px;top:368px;width:3px;height:324px;background:linear-gradient(90deg,#111,#555)"></div>

<span class="f" style="left:278px;top:379px">Дата:</span>
<div class="inp" style="left:326px;top:374px;width:182px;height:25px"></div>
<div style="left:486px;top:375px;width:1px;height:23px;background:#a9a9a9"></div>
<span style="left:338px;top:380px;line-height:14px;color:#666;font-size:11px">.</span>
<span style="left:351px;top:380px;line-height:14px;color:#666;font-size:11px">.</span>
<span style="left:383px;top:380px;line-height:14px;color:#666;font-size:11px">:</span>
<span style="left:396px;top:380px;line-height:14px;color:#666;font-size:11px">:</span>
<div style="left:330px;top:395px;width:153px;height:1px;border-top:1px dotted #cc2222"></div>
<svg class="i" style="left:490px;top:379px;width:13px;height:13px"><use href="#cal"/></svg>

<span class="f" style="left:278px;top:412px">Склад:</span>
<div class="inp" style="left:326px;top:408px;width:409px;height:25px"></div>
<div style="left:693px;top:409px;width:1px;height:23px;background:#a9a9a9"></div>
<div style="left:714px;top:409px;width:1px;height:23px;background:#a9a9a9"></div>
<div class="ar" style="left:700px;top:418px;border-top-color:#444"></div>
<svg class="i" style="left:719px;top:414px;width:12px;height:12px"><use href="#opn"/></svg>

<div class="btn" style="left:278px;top:442px;width:84px;height:26px"></div>
<span class="f" style="left:292px;top:447px">Добавить</span>
<div class="btn" style="left:382px;top:442px;width:60px;height:26px"></div>
<div style="left:412px;top:443px;width:1px;height:23px;background:#c4c4c4"></div>
<svg class="i" style="left:389px;top:446px;width:16px;height:16px"><use href="#up"/></svg>
<svg class="i" style="left:418px;top:446px;width:16px;height:16px"><use href="#dn"/></svg>
<div class="inp" style="left:588px;top:443px;width:260px;height:25px"></div>
<div style="left:826px;top:444px;width:1px;height:23px;background:#a9a9a9"></div>
<span class="f" style="left:591px;top:447px;color:#bcbcbc">Поиск (Ctrl+F)</span>
<svg class="i" style="left:834px;top:451px;width:7px;height:7px"><path d="M1 1l5 5M6 1L1 6" stroke="#666" stroke-width="1.200"/></svg>
<div class="btn" style="left:857px;top:442px;width:61px;height:26px"></div>
<span class="f" style="left:871px;top:447px">Еще</span>
<div class="ar" style="left:904px;top:455px;border-top-color:#555"></div>

<div class="chip" style="left:278px;top:477px;width:137px"></div>
<span class="f" style="left:284px;top:481px;letter-spacing:-.1px;color:#66624f">Поле1: Значение1</span>
<svg class="i" style="left:397px;top:482px;width:12px;height:12px"><use href="#cc"/></svg>
<div class="chip" style="left:430px;top:477px;width:136px"></div>
<span class="f" style="left:435px;top:481px;letter-spacing:-.1px;color:#66624f">Поле2: Значение2</span>
<svg class="i" style="left:548px;top:482px;width:12px;height:12px"><use href="#cc"/></svg>

<div style="left:278px;top:508px;width:640px;height:184px;background:#fff;border:1px solid #a9a9a9;border-bottom:0"></div>
<div style="left:279px;top:509px;width:624px;height:30px;background:#f0f0f0;border-bottom:1px solid #dcdcdc"></div>
<div style="left:672px;top:509px;width:1px;height:30px;background:#fff"></div>
<div style="left:851px;top:509px;width:1px;height:30px;background:#fff"></div>
<div style="left:344px;top:506px;width:161px;height:37px;border:2px solid #2d8cf0"></div>
<span class="f" style="left:287px;top:516px">N</span>
<span class="f" style="left:354px;top:516px">Материал</span>
<span class="f" style="left:512px;top:516px">Количество</span>
<span class="f" style="left:681px;top:516px">Цена</span>
<span class="f" style="left:860px;top:516px">Сумма</span>
<div style="left:907px;top:519px;width:0;height:0;border-left:3px solid transparent;border-right:3px solid transparent;border-bottom:4px solid #ccc"></div>
<div style="left:279px;top:569px;width:624px;height:1px;border-top:1px dotted #c22"></div>

<!-- form scrollbar -->
<div class="sb" style="left:1873px;top:368px;width:15px;height:324px"></div>
<div style="left:1874px;top:368px;width:14px;height:24px;background:#f4f0da;border-bottom:1px solid #b5ae8c"></div>
<div style="left:1877px;top:373px;width:0;height:0;border-left:4px solid transparent;border-right:4px solid transparent;border-bottom:8px solid #9a9a9a"></div>
<div style="left:1874px;top:392px;width:14px;height:46px;background:#fbfaf2;border-bottom:1px solid #b5ae8c"></div>
<div style="left:1874px;top:672px;width:14px;height:20px;background:#f4f0da;border-top:1px solid #b5ae8c"></div>
<div style="left:1877px;top:678px;width:0;height:0;border-left:4px solid transparent;border-right:4px solid transparent;border-top:8px solid #9a9a9a"></div>

<!-- form tabs -->
<div style="left:259px;top:692px;width:1630px;height:1px;background:#b5ae8c"></div>
<div class="tab a" style="left:265px;top:692px;width:75px"></div>
<svg class="i" style="left:275px;top:695px;width:14px;height:14px"><use href="#frm"/></svg>
<span class="tt" style="left:293px;top:694px">Форма</span>
<div class="tab" style="left:347px;top:692px;width:76px"></div>
<svg class="i" style="left:357px;top:694px;width:14px;height:14px"><use href="#doc"/></svg>
<span class="tt" style="left:374px;top:694px">Модуль</span>

<!-- properties side tab -->
<div style="left:1897px;top:28px;width:22px;height:104px;background:#f6f3e0;border:1px solid #b5ae8c;border-right:0"></div>
<svg class="i" style="left:1900px;top:30px;width:16px;height:16px"><use href="#find"/></svg>
<span style="left:1900px;top:49px;writing-mode:vertical-rl;font-size:11px;line-height:16px;white-space:nowrap;color:#333">Свойства: Поле</span>

<!-- messages panel -->
<div style="left:0;top:723px;width:1896px;height:17px;background:#b0b0b0;border-right:1px solid #666"></div>
<span style="left:4px;top:723px;font-weight:700;font-size:11.500px;line-height:17px;color:#5d5d5d;letter-spacing:.15px">Служебные сообщения</span>
<div style="left:1867px;top:728px;width:3px;height:6px;background:#f0f0f0;border-radius:2px"></div>
<svg class="i" style="left:1881px;top:725px;width:13px;height:13px"><path d="M2 2l9 9M11 2l-9 9" stroke="#5d5d5d" stroke-width="2.200"/></svg>
<div style="left:0;top:740px;width:1896px;height:175px;background:#fff"></div>
<div style="left:0;top:740px;width:18px;height:175px;background:repeating-conic-gradient(#dcdcd0 0 25%,#f6f6ee 0 50%) 0 0/2px 2px"></div>
<span style="left:0;top:741px;font:bold 10px/14px 'Liberation Mono',monospace;color:#8a1515">err</span>
<span class="mn" style="left:20px;top:742px">Поле объекта не обнаружено (Материалы)</span>
<span class="mn" style="left:20px;top:758px">{Документ.ПриходнаяНакладная.Форма.ФормаДокумента.Форма(3)}:    СтрокаТабличнойЧасти = Элемент.Материалы.ТекущиеДанные;</span>
<div style="left:0;top:915px;width:1896px;height:20px;background:#fcfaeb"></div>
<div class="tab a" style="left:5px;top:915px;width:156px"></div>
<svg class="i" style="left:13px;top:916px;width:16px;height:16px"><use href="#msg"/></svg>
<span class="tt" style="left:31px;top:917px">Служебные сообщения</span>
<div class="tab" style="left:167px;top:915px;width:138px"></div>
<svg class="i" style="left:177px;top:916px;width:16px;height:16px"><use href="#find"/></svg>
<span class="tt" style="left:195px;top:917px">Результаты поиска</span>

<!-- window bar -->
<div style="left:1px;top:936px;width:172px;height:20px;background:#aec8e6;border:1px solid #8e8e8e"></div>
<svg class="i" style="left:4px;top:939px;width:14px;height:14px"><use href="#ttl"/></svg>
<span class="t" style="left:20px;top:936px;color:#3a3a3a;letter-spacing:-.1px">Документ ПриходнаяНакла…</span>
<div style="left:174px;top:936px;width:172px;height:20px;background:#a9a9a9;border:1px solid #8e8e8e"></div>
<svg class="i" style="left:177px;top:939px;width:14px;height:14px"><use href="#doc"/></svg>
<span class="t" style="left:193px;top:936px;color:#333;letter-spacing:-.1px">Документ ПриходнаяНакла…</span>

<!-- status bar -->
<div style="left:0;top:958px;width:1817px;height:17px;border-top:1px solid #d9d4b8;border-right:1px solid #d9d4b8"></div>
<span class="t" style="left:4px;top:960px;color:#333;line-height:17px;height:17px">Для получения подсказки нажмите F1</span>
<div style="left:1823px;top:958px;width:29px;height:17px;border:1px solid #d9d4b8;border-bottom:0"></div>
<span style="left:1826px;top:960px;line-height:15px;font-size:11.500px;color:#a79a6a">CAP</span>
<div style="left:1857px;top:958px;width:33px;height:17px;border:1px solid #d9d4b8;border-bottom:0"></div>
<span style="left:1860px;top:960px;line-height:15px;font-size:11.500px;color:#5a4a20">NUM</span>
<div style="left:1895px;top:958px;width:24px;height:17px;border:1px solid #d9d4b8;border-bottom:0;border-right:0"></div>
<span style="left:1897px;top:960px;line-height:15px;font-size:11px;color:#222">ru</span>
<div class="ar" style="left:1909px;top:966px"></div>
</body></html>
